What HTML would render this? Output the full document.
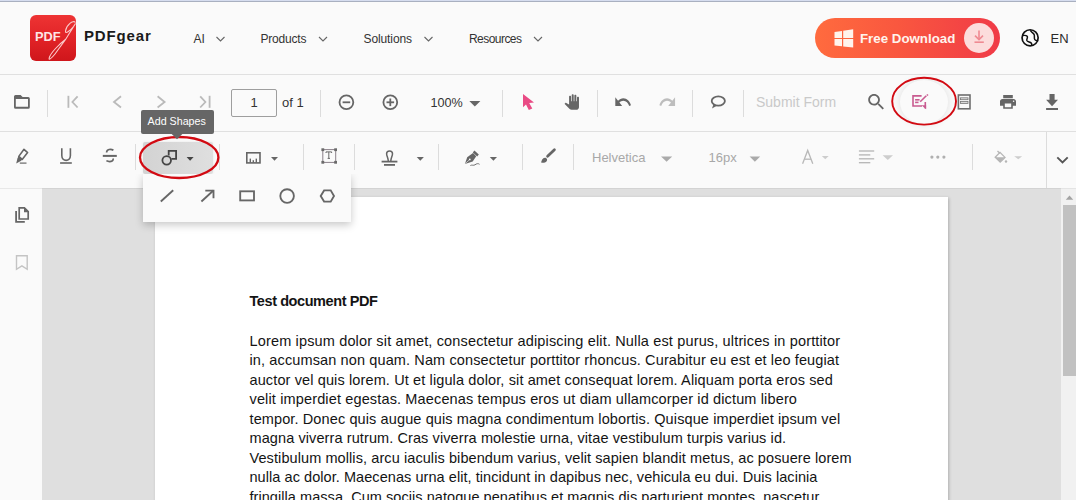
<!DOCTYPE html>
<html><head><meta charset="utf-8">
<style>
*{margin:0;padding:0;box-sizing:border-box}
html,body{width:1076px;height:500px;overflow:hidden;background:#fafafa;font-family:"Liberation Sans",sans-serif;position:relative}
.a{position:absolute;white-space:nowrap}
.full{position:absolute;left:0;top:0;width:1076px;height:500px;overflow:visible}
.tl1{left:0;top:0;width:1076px;height:1px;background:#d6ddef}
.tl2{left:0;top:1px;width:1076px;height:1px;background:#a9b0c0}
.hl{left:0;width:1076px;height:1px;background:#e0e0e0}
.viewer{left:42px;top:188px;width:1019px;height:312px;background:#dfdfdf}
.side{left:0;top:188px;width:42px;height:312px;background:#fafafa;border-top:1px solid #e8e8e8}
.scroll{left:1061px;top:188px;width:15px;height:312px;background:#f1f1f1}
.thumb{left:1063px;top:205px;width:13px;height:171px;background:#c1c1c1}
.page{left:155px;top:197px;width:793px;height:330px;background:#fff;box-shadow:1px 1px 3px rgba(0,0,0,.22)}
.nav{font-size:12px;color:#333;top:32.6px;line-height:12px}
.doc{font-size:14.5px;color:#141414;line-height:14.5px}
.t13{font-size:13px;line-height:13px}
</style></head><body>
<div class="a tl1"></div><div class="a tl2"></div>
<div class="a hl" style="top:74px"></div>
<div class="a hl" style="top:131px"></div>


<!-- viewer -->
<div class="a viewer"></div>
<div class="a side"></div>
<div class="a scroll"></div>
<div class="a thumb"></div>
<div class="a" style="left:42px;top:188px;width:1034px;height:1px;background:rgba(0,0,0,.05)"></div>
<div class="a page"></div>

<div class="a doc" style="left:249.5px;top:294px;font-weight:bold;letter-spacing:-0.42px">Test document PDF</div>
<div class="a doc" style="left:249.5px;top:333.7px;letter-spacing:0.153px">Lorem ipsum dolor sit amet, consectetur adipiscing elit. Nulla est purus, ultrices in porttitor</div>
<div class="a doc" style="left:249.5px;top:353.2px;letter-spacing:0.123px">in, accumsan non quam. Nam consectetur porttitor rhoncus. Curabitur eu est et leo feugiat</div>
<div class="a doc" style="left:249.5px;top:372.7px;letter-spacing:0.123px">auctor vel quis lorem. Ut et ligula dolor, sit amet consequat lorem. Aliquam porta eros sed</div>
<div class="a doc" style="left:249.5px;top:392.2px;letter-spacing:0.142px">velit imperdiet egestas. Maecenas tempus eros ut diam ullamcorper id dictum libero</div>
<div class="a doc" style="left:249.5px;top:411.7px;letter-spacing:0.113px">tempor. Donec quis augue quis magna condimentum lobortis. Quisque imperdiet ipsum vel</div>
<div class="a doc" style="left:249.5px;top:431.2px;letter-spacing:0.096px">magna viverra rutrum. Cras viverra molestie urna, vitae vestibulum turpis varius id.</div>
<div class="a doc" style="left:249.5px;top:450.7px;letter-spacing:0.088px">Vestibulum mollis, arcu iaculis bibendum varius, velit sapien blandit metus, ac posuere lorem</div>
<div class="a doc" style="left:249.5px;top:470.2px;letter-spacing:0.059px">nulla ac dolor. Maecenas urna elit, tincidunt in dapibus nec, vehicula eu dui. Duis lacinia</div>
<div class="a doc" style="left:249.5px;top:489.7px;letter-spacing:0.055px">fringilla massa. Cum sociis natoque penatibus et magnis dis parturient montes, nascetur</div>

<!-- HEADER -->
<div class="a" style="left:30px;top:15px;width:46px;height:46px;border-radius:6px;background:linear-gradient(180deg,#ee3434 0%,#e02226 55%,#cf161b 100%)"></div>
<div class="a" style="left:35px;top:31.3px;font-size:12.8px;line-height:12.8px;font-weight:bold;color:#fde6e6">PDF</div>
<div class="a" style="left:84px;top:28.4px;font-size:15px;line-height:15px;font-weight:bold;color:#1a1a1a;letter-spacing:0.85px">PDFgear</div>

<div class="a nav" style="left:193.5px">AI</div>
<div class="a nav" style="left:260.5px;letter-spacing:-0.2px">Products</div>
<div class="a nav" style="left:363.5px;letter-spacing:-0.1px">Solutions</div>
<div class="a nav" style="left:469px;letter-spacing:-0.55px">Resources</div>

<div class="a" style="left:815px;top:18px;width:185px;height:40px;border-radius:20px;background:linear-gradient(90deg,#ff6b3e 0%,#f9573f 45%,#f03a47 100%)"></div>
<div class="a" style="left:964px;top:23px;width:30px;height:30px;border-radius:15px;background:#fcdcdc"></div>
<div class="a" style="left:860px;top:31.9px;font-size:13.3px;line-height:13.3px;font-weight:bold;color:#fff3ec">Free Download</div>
<div class="a t13" style="left:1050.5px;top:31.7px;color:#2a2a2a">EN</div>

<!-- TOOLBAR 1 texts -->
<div class="a" style="left:231px;top:89px;width:46px;height:28px;border:1px solid #9e9e9e;border-radius:2px;background:#fafafa"></div>
<div class="a t13" style="left:250.5px;top:96px;color:#333">1</div>
<div class="a t13" style="left:282px;top:96px;color:#333">of 1</div>
<div class="a" style="left:430.5px;top:96.5px;font-size:12.6px;line-height:12.6px;color:#333">100%</div>
<div class="a" style="left:756px;top:95.2px;font-size:14px;line-height:14px;color:#c9c9c9">Submit Form</div>

<!-- TOOLBAR 2 texts -->
<div class="a t13" style="left:592px;top:151.1px;color:#a8a8a8">Helvetica</div>
<div class="a t13" style="left:708.5px;top:151.1px;color:#a8a8a8">16px</div>

<!-- active shapes button bg -->
<div class="a" style="left:143px;top:142px;width:70px;height:32px;border-radius:2px;background:linear-gradient(90deg,#d3d3d3 0%,#d9d9d9 50%,#dfdfdf 100%);box-shadow:0 0 3px rgba(0,0,0,.08)"></div>
<!-- edit form hover bg -->
<div class="a" style="left:900px;top:80px;width:48px;height:44px;border-radius:50%;background:#fafafa;box-shadow:0 0 8px rgba(0,0,0,.11)"></div>

<svg class="full" viewBox="0 0 1076 500">
 <!-- logo g -->
 <path d="M75.5 22.5 C73 19.5 66.5 25 65.5 31 C65 34.5 70 31 73.5 26.5 L75.5 23.5 C70 33 62 45 55 54 C51 59 48 61 49.5 57 C51 53 58 45 66 39" fill="none" stroke="#fbcaca" stroke-width="1.1"/>
 <!-- header chevrons -->
 <g fill="none" stroke="#666" stroke-width="1.1">
  <polyline points="216.5,37 220.5,41 224.5,37"/>
  <polyline points="319,37 323,41 327,37"/>
  <polyline points="424.5,37 428.5,41 432.5,37"/>
  <polyline points="534,37 538,41 542,37"/>
 </g>
 <!-- windows logo -->
 <g fill="#fff4ec">
  <polygon points="834.5,32 842,31 842,38.1 834.5,38.1"/>
  <polygon points="834.5,39.1 842,39.1 842,46.3 834.5,45.4"/>
  <polygon points="843.2,30.8 853.2,29.2 853.2,38.1 843.2,38.1"/>
  <polygon points="843.2,39.1 853.2,39.1 853.2,47.5 843.2,46.4"/>
 </g>
 <!-- download in circle -->
 <g fill="none" stroke="#ef8a92" stroke-width="1.6">
  <line x1="979" y1="30.5" x2="979" y2="39.5"/>
  <polyline points="975,35.6 979,39.6 983,35.6"/>
  <line x1="974.5" y1="42.2" x2="983.8" y2="42.2"/>
 </g>
 <!-- globe -->
 <g fill="none" stroke="#111" stroke-width="1.7">
  <circle cx="1030.1" cy="37.8" r="8.05"/>
  <path d="M1022.3 35.6 C1024 35.3 1026.3 35.2 1027.2 36.2 C1028.2 37.5 1026.5 39 1026.8 40.4 C1027.3 42 1030 41.8 1031.2 43 C1031.8 43.8 1031.8 44.6 1031.9 45.4" stroke-width="1.5"/>
  <path d="M1030.4 30.3 C1031 32.3 1033.6 33 1034.2 34.8 C1034.8 36.6 1033.8 38.3 1034.8 39.6 C1035.6 40.6 1037 40.8 1038.2 40.6" stroke-width="1.5"/>
 </g>
 <!-- toolbar separators -->
 <g fill="#dcdcdc">
  <rect x="47" y="90" width="1" height="27"/>
  <rect x="320" y="90" width="1" height="27"/>
  <rect x="502" y="90" width="1" height="27"/>
  <rect x="597" y="90" width="1" height="27"/>
  <rect x="692" y="90" width="1" height="27"/>
  <rect x="743" y="90" width="1" height="27"/>
  <rect x="135" y="144" width="1" height="26"/>
  <rect x="219" y="144" width="1" height="26"/>
  <rect x="303" y="144" width="1" height="26"/>
  <rect x="354" y="144" width="1" height="26"/>
  <rect x="438" y="144" width="1" height="26"/>
  <rect x="522" y="144" width="1" height="26"/>
  <rect x="573" y="144" width="1" height="26"/>
  <rect x="972" y="144" width="1" height="26"/>
  <rect x="1046" y="132" width="1" height="56"/>
 </g>

 <!-- folder -->
 <path fill="#666" fill-rule="evenodd" d="M14 96.5 a1.5 1.5 0 0 1 1.5 -1.5 H20.6 L22.6 97 H28.3 a1.5 1.5 0 0 1 1.5 1.5 V107.2 a1.5 1.5 0 0 1 -1.5 1.5 H15.5 a1.5 1.5 0 0 1 -1.5 -1.5 Z M15.8 98.9 V106.8 H28 V98.9 Z"/>
 <!-- nav arrows -->
 <g fill="none" stroke="#bababa" stroke-width="1.8">
  <line x1="68.4" y1="95.8" x2="68.4" y2="107.8"/>
  <polyline points="77.6,96.3 72.4,102 77.6,107.5"/>
  <polyline points="121,96.3 114,102 121,107.5"/>
  <polyline points="157.6,96.3 164.6,102 157.6,107.5"/>
  <polyline points="200.2,96.3 205.4,102 200.2,107.5"/>
  <line x1="209.6" y1="95.8" x2="209.6" y2="107.8"/>
 </g>
 <!-- zoom circles -->
 <g fill="none" stroke="#666" stroke-width="1.8">
  <circle cx="346.4" cy="102.3" r="6.9"/>
  <line x1="342.6" y1="102.3" x2="350.2" y2="102.3"/>
  <circle cx="390.3" cy="102.3" r="6.9"/>
  <line x1="386.5" y1="102.3" x2="394.1" y2="102.3"/>
  <line x1="390.3" y1="98.5" x2="390.3" y2="106.1"/>
 </g>
 <!-- zoom caret -->
 <polygon points="469.3,101 480.4,101 474.85,106.6" fill="#666"/>
 <!-- cursor -->
 <polygon points="523,94 534,102.4 529.2,102.9 532.3,108.4 528.8,110 526,104.4 523,107.2" fill="#e94b85"/>
 <!-- hand -->
 <path transform="translate(563.8,94.2) scale(0.66,0.65)" fill="#666" d="M23 5.5V20c0 2.2-1.8 4-4 4h-7.3c-1.08 0-2.1-.43-2.85-1.190L1 14.83s1.26-1.23 1.3-1.25c.22-.19.49-.29.79-.29.22 0 .42.06.6.16.04.01 4.31 2.46 4.31 2.46V4c0-.83.67-1.5 1.5-1.5S11 3.17 11 4v7h1V1.5c0-.83.67-1.5 1.5-1.5S15 .67 15 1.5V11h1V2.5c0-.83.67-1.5 1.5-1.5s1.5.67 1.5 1.5V11h1V5.5c0-.83.67-1.5 1.5-1.5s1.5.67 1.5 1.5z"/>
 <!-- undo / redo -->
 <path transform="translate(615.3,98.3) scale(0.766,0.97) translate(-2,-8)" fill="#666" d="M12.5 8c-2.65 0-5.050.99-6.9 2.6L2 7v9h9l-3.62-3.62c1.39-1.16 3.16-1.88 5.12-1.88 3.540 0 6.55 2.31 7.6 5.5l2.37-.78C21.080 11.03 17.15 8 12.5 8z"/>
 <path transform="translate(659.4,98.3) scale(0.766,0.97) translate(-1.54,-8)" fill="#bdbdbd" d="M18.4 10.6C16.55 8.99 14.15 8 11.5 8c-4.65 0-8.58 3.03-9.96 7.22L3.9 16c1.05-3.19 4.05-5.5 7.6-5.5 1.95 0 3.73.72 5.12 1.88L13 16h9V7l-3.6 3.6z"/>
 <!-- comment -->
 <g fill="none" stroke="#666" stroke-width="1.8">
  <ellipse cx="718.3" cy="101" rx="6.6" ry="4.6"/>
 </g>
 <path d="M713.5 104.2 L712 108.5 L717.2 105.6 Z" fill="#666"/>
 <!-- search -->
 <path transform="translate(868.2,94.1) scale(0.9,0.88) translate(-3,-3)" fill="#666" d="M15.5 14h-.79l-.28-.27C15.41 12.59 16 11.11 16 9.5 16 5.91 13.09 3 9.5 3S3 5.91 3 9.5 5.91 16 9.5 16c1.61 0 3.09-.59 4.23-1.57l.27.28v.79l5 4.99L20.49 19l-4.99-5zm-6 0C7.01 14 5 11.99 5 9.5S7.01 5 9.5 5 14 7.01 14 9.5 11.99 14 9.5 14z"/>
 <!-- edit form (pink) -->
 <g fill="none" stroke="#c95b90" stroke-width="1.6">
  <polyline points="921.6,95.9 913,95.9 913,106 922,106"/>
  <line x1="925.3" y1="102" x2="925.3" y2="108.5"/>
  <line x1="915.1" y1="99.8" x2="919.6" y2="99.8"/>
  <line x1="915.1" y1="102.4" x2="918.5" y2="102.4"/>
  <line x1="920.2" y1="101.8" x2="926.3" y2="95.7"/>
 </g>
 <polygon points="921.5,105.2 926.1,105.2 926.1,109.2" fill="#c95b90"/>
 <line x1="926.8" y1="94.4" x2="928" y2="95.5" stroke="#c95b90" stroke-width="1.4"/>
 <!-- form list -->
 <g fill="none" stroke="#6e6e6e" stroke-width="1.6">
  <rect x="958.4" y="95" width="11.6" height="13.8"/>
 </g>
 <g fill="#d9d9d9" stroke="#777" stroke-width="0.8">
  <rect x="960.4" y="97.8" width="7.6" height="1.9"/>
  <rect x="960.4" y="101.4" width="7.6" height="2"/>
 </g>
 <!-- printer -->
 <path transform="translate(1000,95.1) scale(0.8,0.76) translate(-2,-3)" fill="#666" d="M19 8H5c-1.66 0-3 1.34-3 3v6h4v4h12v-4h4v-6c0-1.66-1.34-3-3-3zm-3 11H8v-5h8v5zm3-7c-.55 0-1-.45-1-1s.45-1 1-1 1 .45 1 1-.45 1-1 1zm-1-9H6v4h12V3z"/>
 <!-- download -->
 <path transform="translate(1046.1,94.1) scale(0.85,0.93) translate(-5,-3)" fill="#666" d="M19 9h-4V3H9v6H5l7 7 7-7zM5 18v2h14v-2H5z"/>

 <!-- TOOLBAR 2 -->
 <!-- highlighter -->
 <g fill="none" stroke="#666" stroke-width="1.6" stroke-linejoin="round">
  <polygon points="24,149.3 27.6,152.6 22.2,159.4 18.8,156.4"/>
 </g>
 <polygon points="18.5,156.2 22.4,159.6 20.8,161 16.2,163.6 17.4,158.6" fill="#666"/>
 <line x1="19.8" y1="163.1" x2="26.5" y2="163.1" stroke="#666" stroke-width="1.2"/>
 <!-- underline -->
 <path d="M61.8 148.2 V155.5 C61.8 162 70.4 162 70.4 155.5 V148.2" fill="none" stroke="#666" stroke-width="1.6"/>
 <rect x="60.1" y="162.2" width="11.7" height="1.6" fill="#666"/>
 <!-- strikethrough -->
 <g fill="none" stroke="#666" stroke-width="1.7">
  <path d="M113.4 150.3 C111 148.6 106.6 149 106.6 152.6"/>
  <path d="M113 158.6 C114 161.8 109 162.2 106.4 160.6"/>
 </g>
 <rect x="102.8" y="154.9" width="14" height="2" fill="#666"/>
 <!-- shapes icon -->
 <g fill="none" stroke="#444" stroke-width="1.8">
  <path d="M168.7 155.6 V150.9 H176.1 V158.8 H171.4"/>
  <circle cx="166.7" cy="160.35" r="4.3"/>
 </g>
 <polygon points="186.6,156.9 193.6,156.9 190.1,160.7" fill="#444"/>
 <!-- measure -->
 <g fill="none" stroke="#666" stroke-width="1.6">
  <rect x="246.8" y="152.8" width="13.2" height="10.1"/>
 </g>
 <g fill="#666">
  <rect x="249.6" y="158.6" width="1.4" height="4"/>
  <rect x="252.6" y="160.2" width="1.4" height="2.4"/>
  <rect x="255.6" y="158.6" width="1.4" height="4"/>
 </g>
 <polygon points="271,156.9 278,156.9 274.5,160.7" fill="#666"/>
 <!-- text box -->
 <rect x="322.8" y="149.6" width="12.9" height="12.8" fill="none" stroke="#8a8089" stroke-width="1"/>
 <g fill="#6a6a6a">
  <rect x="321.4" y="148.3" width="2.8" height="2.8"/>
  <rect x="334.2" y="148.3" width="2.8" height="2.8"/>
  <rect x="321.4" y="160.9" width="2.8" height="2.8"/>
  <rect x="334.2" y="160.9" width="2.8" height="2.8"/>
 </g>
 <path d="M326 153 V151.9 H331.6 V153 M328.8 151.9 V158.4 M327.6 158.4 H330" fill="none" stroke="#6a6a6a" stroke-width="1"/>
 <!-- stamp -->
 <path d="M388.3 161 C388.1 157.8 386.6 156 386.6 153.8 C386.6 152 387.8 150.9 389.55 150.9 C391.3 150.9 392.5 152 392.5 153.8 C392.5 156 391 157.8 390.8 161" fill="none" stroke="#666" stroke-width="1.5"/>
 <rect x="381.6" y="160.7" width="15.8" height="1.8" fill="#666"/>
 <rect x="384" y="164" width="11" height="1.8" fill="#666"/>
 <polygon points="416.7,157.1 423.9,157.1 420.3,160.8" fill="#666"/>
 <!-- signature pen -->
 <path d="M464.9 163.9 L467.2 157.2 L473 153 L476.2 156.3 L472.7 161.4 Z" fill="#666"/>
 <line x1="473.6" y1="151.5" x2="478" y2="155.5" stroke="#666" stroke-width="2.4"/>
 <circle cx="469.8" cy="159.4" r="0.9" fill="#fafafa"/>
 <line x1="465.2" y1="163.6" x2="469.4" y2="159.8" stroke="#fafafa" stroke-width="0.6"/>
 <path d="M470.4 165.5 C472 164.6 473.5 165.8 475 164.8 C476.5 163.6 478.2 163.2 479.5 164.3" fill="none" stroke="#707070" stroke-width="1"/>
 <polygon points="489.8,157.1 497,157.1 493.4,160.8" fill="#666"/>
 <!-- brush -->
 <line x1="547.6" y1="156.2" x2="554.4" y2="149.8" stroke="#666" stroke-width="2.8" stroke-linecap="round"/>
 <path d="M545.6 157.8 C547.8 158.6 547.6 161.6 545 162.4 C543.6 162.8 541.8 162.8 540.9 162.6 C541.6 161.8 541.6 160.6 542.2 159.6 C542.8 158.4 544.2 157.4 545.6 157.8 Z" fill="#666"/>
 <!-- font carets -->
 <polygon points="661,156.6 672.2,156.6 666.6,161.8" fill="#aaa"/>
 <polygon points="749.6,156.6 760.2,156.6 754.9,161.8" fill="#aaa"/>
 <!-- A -->
 <g fill="none" stroke="#b8b8b8" stroke-width="1.3">
  <polyline points="802.6,163.7 807.7,150.4 812.8,163.7"/>
  <line x1="804.4" y1="159.2" x2="811" y2="159.2"/>
 </g>
 <polygon points="821.8,156.1 828.7,156.1 825.25,159.2" fill="#cdcdcd"/>
 <!-- align -->
 <g stroke="#b5b5b5" stroke-width="1.3">
  <line x1="858.9" y1="151" x2="874.2" y2="151"/>
  <line x1="858.9" y1="154.9" x2="870.3" y2="154.9"/>
  <line x1="858.9" y1="158.8" x2="874.2" y2="158.8"/>
  <line x1="858.9" y1="162.7" x2="870.3" y2="162.7"/>
 </g>
 <polygon points="882.6,155.2 893,155.2 887.8,160" fill="#cdcdcd"/>
 <!-- dots -->
 <g fill="#b0b0b0">
  <circle cx="931.9" cy="157.1" r="1.6"/>
  <circle cx="937.8" cy="157.1" r="1.6"/>
  <circle cx="943.9" cy="157.1" r="1.6"/>
 </g>
 <!-- bucket -->
 <path d="M997.5 151 L1000 153.5 M995.2 157.2 L1000 152.4 L1005 157.4 L1000.2 162.2 Z" fill="none" stroke="#b5b5b5" stroke-width="1.3"/>
 <path d="M995.4 157.3 H1004.9 L1000.2 162 Z" fill="#b5b5b5"/>
 <circle cx="1006" cy="161.5" r="1.2" fill="#b5b5b5"/>
 <polygon points="1014.2,156.2 1022.2,156.2 1018.2,159.2" fill="#cdcdcd"/>
 <!-- chevron down -->
 <polyline points="1057.3,157.4 1062.5,162.4 1067.7,157.4" fill="none" stroke="#555" stroke-width="1.9"/>

 <!-- sidebar icons -->
 <path d="M19.2 219 V207.9 H24.4 L28.2 211.7 V219 Z" fill="none" stroke="#666" stroke-width="1.7"/>
 <polygon points="24,207.2 29,212.2 24,212.2" fill="#666"/>
 <path d="M16.1 210.9 V221.8 H24.8" fill="none" stroke="#666" stroke-width="1.8"/>
 <path d="M16.5 255.7 H27.2 V269.3 L21.9 265.8 L16.5 269.3 Z" fill="none" stroke="#c4c4c4" stroke-width="1.4"/>
 <!-- scrollbar arrow -->
 <polygon points="1065.8,199.8 1073.2,199.8 1069.5,195.6" fill="#a3a3a3"/>
</svg>

<!-- POPUP -->
<div class="a" style="left:143px;top:174px;width:208px;height:48px;background:#fafafa;box-shadow:0 3px 8px rgba(0,0,0,.22);clip-path:inset(0 -20px -20px -20px)"></div>
<svg class="full" viewBox="0 0 1076 500">
 <g fill="none" stroke="#666" stroke-width="1.85">
  <line x1="160.8" y1="201.5" x2="173.2" y2="190.3"/>
  <line x1="201.4" y1="201.5" x2="213.4" y2="190.5"/>
  <polyline points="205.3,190.6 213.5,190.6 213.5,198.3"/>
  <rect x="240.2" y="191.3" width="13.8" height="9.1"/>
  <circle cx="287.1" cy="196" r="6.8"/>
  <polygon points="320.7,196 324.1,190.4 330.7,190.4 334,196 330.7,201.6 324.1,201.6"/>
 </g>
</svg>



<!-- RED ELLIPSES -->
<svg class="full" viewBox="0 0 1076 500">
 <g fill="none" stroke="#d20a12" stroke-width="2.3">
  <ellipse cx="179.2" cy="157.5" rx="39.2" ry="20.5"/>
 </g>
 <ellipse cx="924.1" cy="101.2" rx="31.9" ry="23.4" fill="none" stroke="#d20a12" stroke-width="1.9"/>
</svg>
<!-- TOOLTIP -->
<div class="a" style="left:141px;top:110px;width:73px;height:23.5px;border-radius:2px;background:#666"></div>
<svg class="full" viewBox="0 0 1076 500"><polygon points="171.2,133.4 182.8,133.4 177,139.2" fill="#666"/></svg>
<div class="a" style="left:147.6px;top:115.9px;font-size:10.7px;line-height:10px;color:#fff">Add Shapes</div>
</body></html>
